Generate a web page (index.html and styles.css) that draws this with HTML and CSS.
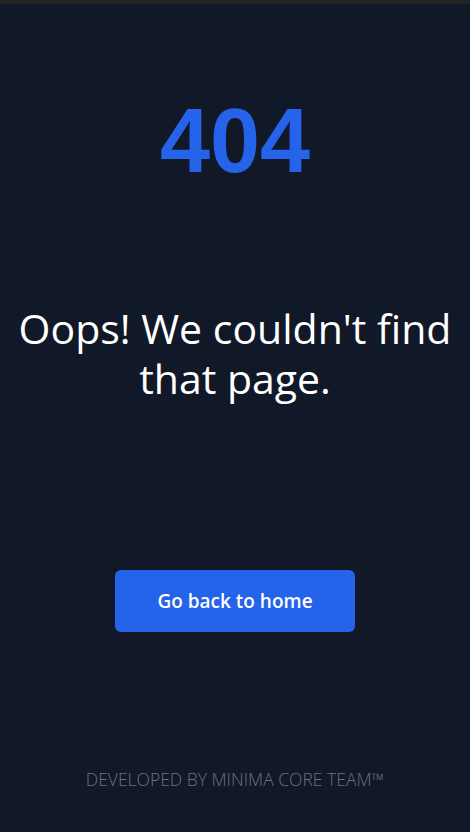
FILE: index.html
```html
<!DOCTYPE html>
<html lang="en">
<head>
    <meta charset="UTF-8">
    <meta name="viewport" content="width=device-width, initial-scale=1.0">
    <title>404 - Page not found</title>
    <link rel="stylesheet" href="styles.css">
</head>
<body>

    <div class="topbar"></div>

    <main class="notfound">
        <h1 class="code">404</h1>
        <h2 class="message">Oops! We couldn't find that page.</h2>
        <a class="home-btn" href="#">Go back to home</a>
        <footer class="credits">Developed by Minima Core Team™</footer>
    </main>

</body>
</html>
```

FILE: styles.css
```css
body {
    margin: 0;
    background-color: #111827;
    font-family: "Open Sans", "Noto Sans", sans-serif;
    color: #fff;
}

.topbar {
    height: 4px;
    background-color: #222326;
}

.notfound {
    display: flex;
    flex-direction: column;
    align-items: center;
    text-align: center;
    padding: 0 12px;
}

.code {
    margin: 92px 0 0;
    font-family: "Liberation Sans", Arial, sans-serif;
    font-size: 90px;
    font-weight: 700;
    line-height: 1;
    color: #2563eb;
}

.message {
    margin: 117px 0 0;
    font-size: 41px;
    font-weight: 400;
    line-height: 50px;
}

.home-btn {
    margin-top: 167px;
    padding: 0 42px;
    height: 62px;
    line-height: 62px;
    border-radius: 6px;
    background-color: #2563eb;
    color: #fff;
    font-size: 19px;
    font-weight: 600;
    text-decoration: none;
}

.credits {
    margin-top: 135px;
    font-size: 17.5px;
    font-weight: 300;
    line-height: 24px;
    text-transform: uppercase;
    color: #6b7280;
}
```
